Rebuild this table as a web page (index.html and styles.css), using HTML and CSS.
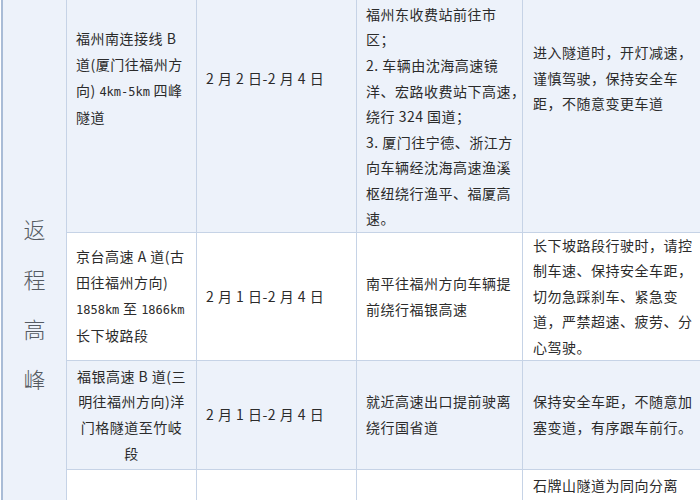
FILE: index.html
```html
<!DOCTYPE html>
<html lang="zh-CN">
<head>
<meta charset="utf-8">
<title>返程高峰</title>
<link rel="stylesheet" href="styles.css">
</head>
<body>
<div class="sheet">
  <div class="cell head"><div>返<br>程<br>高<br>峰</div></div>

  <div class="cell shade"><div>福州南连接线 B<br>道(厦门往福州方<br>向) <span class="lat">4km-5km</span> 四峰<br>隧道</div></div>
  <div class="cell shade"><div>2 月 2 日-2 月 4 日</div></div>
  <div class="cell shade"><div>1. 厦门往福州方向车辆<br>经福州南连接线绕行<br>至机场高速，由<br>福州东收费站前往市<br>区；<br>2. 车辆由沈海高速镜<br>洋、宏路收费站下高速，<br>绕行 324 国道；<br>3. 厦门往宁德、浙江方<br>向车辆经沈海高速渔溪<br>枢纽绕行渔平、福厦高<br>速。</div></div>
  <div class="cell shade last"><div>进入隧道时，开灯减速，<br>谨慎驾驶，保持安全车<br>距，不随意变更车道</div></div>

  <div class="cell"><div>京台高速 A 道(古<br>田往福州方向)<br><span class="lat">1858km</span> 至 <span class="lat">1866km</span><br>长下坡路段</div></div>
  <div class="cell"><div>2 月 1 日-2 月 4 日</div></div>
  <div class="cell"><div>南平往福州方向车辆提<br>前绕行福银高速</div></div>
  <div class="cell last"><div>长下坡路段行驶时，请控<br>制车速、保持安全车距，<br>切勿急踩刹车、紧急变<br>道，严禁超速、疲劳、分<br>心驾驶。</div></div>

  <div class="cell shade center"><div>福银高速 B 道(三<br>明往福州方向)洋<br>门格隧道至竹岐<br>段</div></div>
  <div class="cell shade"><div>2 月 1 日-2 月 4 日</div></div>
  <div class="cell shade"><div>就近高速出口提前驶离<br>绕行国省道</div></div>
  <div class="cell shade last"><div>保持安全车距，不随意加<br>塞变道，有序跟车前行。</div></div>

  <div class="cell"><div>沈海高速 A 道(宁<br>德往福州方向)<br>石牌山隧道</div></div>
  <div class="cell"><div>2 月 1 日-2 月 4 日</div></div>
  <div class="cell"><div>从福州北收费站下<br>高速绕行国道</div></div>
  <div class="cell last"><div>石牌山隧道为同向分离<br>式隧道，进入隧道前<br>请减速慢行，开启<br>车灯，保持安全车距，<br>严禁在隧道内超车、<br>变道，遇拥堵时有序<br>排队通行，服从现场<br>交警指挥。</div></div>
</div>
</body>
</html>
```

FILE: styles.css
```css
html, body {
  margin: 0;
  padding: 0;
  background: #ffffff;
  overflow: hidden;
}

.sheet {
  display: grid;
  grid-template-columns: 64px 130px 160px 166px 200px;
  grid-template-rows: 308px 128px 109px 212px;
  width: max-content;
  margin: -75px 0 0 1px;
  border-left: 2px solid #a9bcd6;
  font-family: "Noto Sans CJK SC", "Noto Sans", sans-serif;
  font-size: 14px;
  letter-spacing: 0.5px;
  line-height: 25.6px;
  color: #2b2b2b;
}

.cell {
  box-sizing: border-box;
  display: flex;
  align-items: center;
  padding: 0 4px 0 9px;
  border-right: 1px solid #c6d3e6;
  border-bottom: 1px solid #c6d3e6;
  white-space: nowrap;
  background: #ffffff;
}

.shade {
  background: #edf2fa;
}

.head {
  grid-row: 1 / span 4;
  justify-content: center;
  padding: 0;
  text-align: center;
  background: #edf2fa;
  font-size: 22px;
  line-height: 50px;
  letter-spacing: 0;
  font-weight: 300;
  color: #555b62;
}

.center {
  justify-content: center;
  text-align: center;
  padding: 0 4px;
}

.last {
  padding-left: 10px;
}

.lat {
  font-family: "DejaVu Sans Mono", "Liberation Mono", monospace;
  font-size: 12px;
  letter-spacing: 0;
}
```
